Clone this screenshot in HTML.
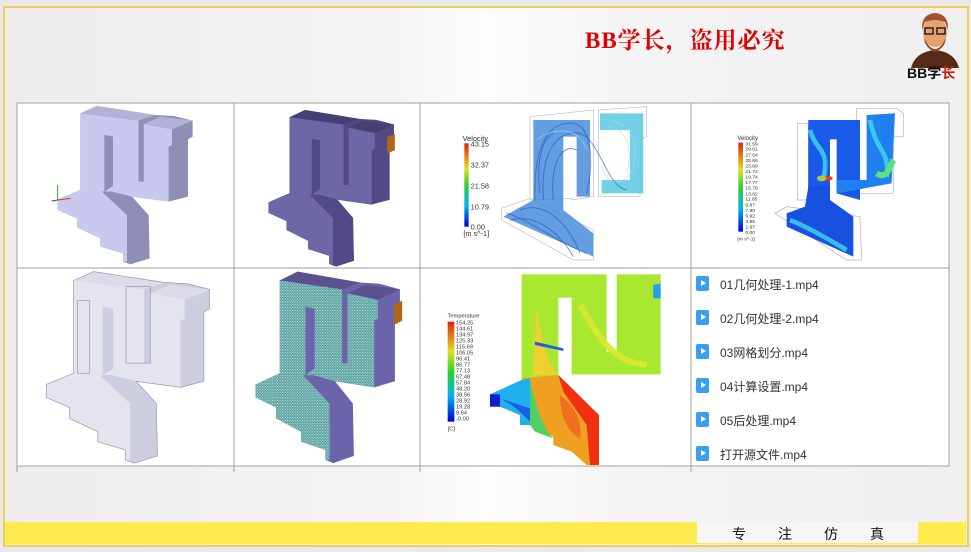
<!DOCTYPE html>
<html><head><meta charset="utf-8"><style>
*{margin:0;padding:0}
body{width:971px;height:552px;overflow:hidden;background:#e9e9e9;font-family:"Liberation Sans","Noto Sans CJK SC",sans-serif;position:relative}
.frame{position:absolute;left:3px;top:6px;width:962px;height:537px;border:2px solid #f0cf50;background:linear-gradient(90deg,#ededed 0%,#f4f4f4 40%,#fdfdfd 50%,#f4f4f4 65%,#efefef 100%)}
.title{position:absolute;left:585px;top:22px;font-family:"Liberation Serif","Noto Serif CJK SC",serif;font-weight:bold;font-size:23px;color:#e00000;letter-spacing:1px}
.bar{position:absolute;left:5px;top:522px;width:961px;height:22px;background:#ffea50}
.wbox{position:absolute;left:697px;top:522px;width:221px;height:21px;background:#f6f6f6;font-family:"Liberation Sans","Noto Sans CJK SC",sans-serif;font-size:14px;color:#111}
.wbox span{position:absolute;top:2px}
.list{position:absolute;left:696px;font-size:12px;color:#333}
.list div{position:absolute;left:0;width:200px;height:16px;white-space:nowrap}
.ic{position:absolute;left:0;top:0;width:13px;height:15px;background:#3a9ff0;border-radius:2px}
.ic:after{content:"";position:absolute;left:5px;top:4px;border-left:5px solid #fff;border-top:3.5px solid transparent;border-bottom:3.5px solid transparent}
.list span{position:absolute;left:24px;top:0}
</style></head><body>
<div class="frame"></div>
<div class="title">BB学长，盗用必究</div>

<svg width="971" height="552" style="position:absolute;left:0;top:0">
<defs>
<symbol id="solid" overflow="visible">
 <polygon style="fill:var(--s)" points="190,40 240,18 415,45 470,48 527,62 527,110 513,118 513,290 455,305 345,290 395,345 398,475 340,493 318,485 318,460 250,440 250,415 180,382 180,355 122,330 122,298 190,270"/>
 <polygon style="fill:var(--t)" points="190,40 240,18 415,45 365,62"/>
 <polygon style="fill:var(--t)" points="380,72 430,50 527,62 465,88"/>
 <polygon style="fill:var(--f)" points="190,40 365,62 365,245 380,245 380,72 465,88 465,135 455,140 455,305 345,290 285,275 255,275 330,345 330,485 318,485 318,460 250,440 250,415 180,382 180,355 122,330 122,298 190,270"/>
 <polygon style="fill:var(--s)" points="262,105 288,110 288,258 262,275"/>
 <polygon style="fill:var(--s)" points="365,62 380,62 380,245 365,245"/>
 <polygon style="fill:var(--s)" points="255,275 285,275 395,345 330,345"/>
</symbol>
<pattern id="mesh" width="7" height="7" patternUnits="userSpaceOnUse">
 <rect width="7" height="7" fill="#4f9b9b"/><circle cx="2" cy="2" r="1.6" fill="#e8f4f4"/><circle cx="5.5" cy="5" r="1.3" fill="#cfe8e6"/>
</pattern>
<linearGradient id="leg" x1="0" y1="1" x2="0" y2="0">
 <stop offset="0" stop-color="#0000d0"/><stop offset=".25" stop-color="#00b0f0"/><stop offset=".5" stop-color="#30d030"/><stop offset=".7" stop-color="#e0e020"/><stop offset="1" stop-color="#e02010"/>
</linearGradient>
</defs>
<rect x="17" y="103" width="932" height="363" fill="#fff" stroke="#a0a0a0" stroke-width="1"/>
<line x1="17" y1="268" x2="949" y2="268" stroke="#a0a0a0"/>
<line x1="234" y1="103" x2="234" y2="472" stroke="#a0a0a0"/>
<line x1="420" y1="103" x2="420" y2="472" stroke="#a0a0a0"/>
<line x1="691" y1="103" x2="691" y2="472" stroke="#a0a0a0"/>
<line x1="17" y1="466" x2="17" y2="472" stroke="#a0a0a0"/>

<g transform="translate(17,100) scale(0.3333)">
 <use href="#solid" style="--f:#c9c9ef;--s:#8f8fb6;--t:#b2b2d8"/>
 <line x1="122" y1="300" x2="122" y2="255" stroke="#2a2" stroke-width="3"/>
 <line x1="122" y1="300" x2="160" y2="295" stroke="#d33" stroke-width="3"/>
 <line x1="122" y1="300" x2="104" y2="303" stroke="#33c" stroke-width="3"/>
</g>
<g transform="translate(17,100) scale(0.3333) translate(641,12) scale(0.93,0.99)">
 <use href="#solid" style="--f:#6d67a8;--s:#514a86;--t:#463f72"/>
 <polygon points="505,100 527,90 527,140 505,150" fill="#b06818" transform="translate(-50,0) scale(1.1,1)"/>
</g>
<g transform="translate(17,265) scale(0.3333) translate(-60,-2) scale(1.21)" opacity="0.75">
 <use href="#solid" style="--f:#dcdcea;--s:#bdbdd6;--t:#cfcfe4"/>
</g>
<g transform="translate(17,265) scale(0.3333) translate(-60,-2) scale(1.21)" fill="none" stroke="#8a8aa8" stroke-width="1.5">
 <polygon points="190,40 240,18 415,45 470,48 527,62 527,110 513,118 513,290 455,305 345,290 395,345 398,475 340,493 318,485 318,460 250,440 250,415 180,382 180,355 122,330 122,298 190,270"/>
 <rect x="200" y="90" width="30" height="180"/><rect x="320" y="55" width="60" height="190"/>
</g>
<g transform="translate(17,265) scale(0.3333) translate(585,-2) scale(1.07,1.21)">
 <use href="#solid" style="--f:url(#mesh);--s:#6c64aa;--t:#5a5390"/>
 <polygon points="505,100 527,90 527,140 505,150" fill="#b06818" transform="translate(-20,0) scale(1.05,1)"/>
</g>

<g transform="translate(420,100) scale(0.3333)">
 <g fill="none" stroke="#b8c0c8" stroke-width="2">
  <polygon points="330,50 520,30 520,290 455,300 455,295 330,300"/>
  <polygon points="535,30 680,20 680,110 660,120 660,290 535,290"/>
  <polygon points="245,325 330,295 520,390 520,480 460,480 245,360"/>
 </g>
 <path d="M340 60 H510 V290 H470 V110 H430 V330 L520 400 V470 L250 350 L340 300 Z" fill="#3d86d8" opacity=".8"/>
 <path d="M540 40 H670 V280 H545 V240 H630 V90 H540 Z" fill="#5ac8e0" opacity=".85"/>
 <g fill="none" stroke="#1e50c0" stroke-width="3" opacity=".6">
  <path d="M345 300 C340 150 380 60 460 70 C520 80 520 200 500 280"/>
  <path d="M370 300 C360 140 420 90 480 100 C540 120 560 260 620 270"/>
  <path d="M260 340 C330 360 400 420 500 460"/>
  <path d="M300 330 C380 300 450 380 480 460"/>
  <path d="M400 300 C390 180 430 130 470 150"/>
  <path d="M360 280 C350 200 360 120 400 100"/>
  <path d="M270 360 C350 340 420 400 460 470"/>
 </g>
 <g fill="none" stroke="#9ee0f0" stroke-width="2" opacity=".8">
  <path d="M540 60 C620 50 660 120 640 200 C620 260 560 260 545 200"/>
  <path d="M350 120 C400 80 480 80 500 150"/>
  <path d="M560 80 C620 80 640 150 620 220"/>
 </g>
 <rect x="133" y="130" width="13" height="250" fill="url(#leg)"/>
 <g font-size="22" fill="#333" font-family="Liberation Sans">
  <text x="128" y="123">Velocity</text>
  <text x="152" y="139">43.15</text><text x="152" y="202">32.37</text><text x="152" y="265">21.58</text><text x="152" y="328">10.79</text><text x="152" y="388">0.00</text><text x="130" y="408">[m s^-1]</text>
 </g>
</g>

<g transform="translate(690,100) scale(0.3333)">
 <g fill="none" stroke="#b0b0b8" stroke-width="2">
  <polygon points="322,70 355,70 355,300 322,300"/>
  <polygon points="500,25 620,25 640,40 640,110 610,110 610,280 500,280"/>
  <polygon points="255,340 290,320 510,350 515,480 470,480"/>
 </g>
 <polygon points="355,60 510,60 510,300 440,280 440,118 420,118 420,300 355,300" fill="#1a5ae8"/>
 <polygon points="530,45 615,40 605,250 440,280 440,240 530,240" fill="#2080f0"/>
 <polygon points="355,260 420,255 420,300 490,350 490,470 290,380 290,340 345,320" fill="#1850e0"/>
 <path d="M360 90 C380 160 420 140 400 240 M540 60 C560 160 600 150 590 230 M300 360 C350 380 420 420 470 450" stroke="#40d8f0" stroke-width="14" fill="none" opacity=".8"/>
 <path d="M560 220 C590 240 600 200 610 180" stroke="#60e080" stroke-width="18" fill="none"/>
 <ellipse cx="410" cy="235" rx="18" ry="7" fill="#e04010"/>
 <ellipse cx="395" cy="235" rx="14" ry="9" fill="#c0e030" opacity=".8"/>
 <rect x="145" y="128" width="14" height="267" fill="url(#leg)"/>
 <g font-size="15" fill="#333" font-family="Liberation Sans">
  <text x="142" y="120" font-size="18">Velocity</text>
  <text x="166" y="136">31.59</text><text x="166" y="152">29.61</text><text x="166" y="169">27.64</text><text x="166" y="186">25.66</text><text x="166" y="202">23.69</text><text x="166" y="219">21.72</text><text x="166" y="236">19.74</text><text x="166" y="252">17.77</text><text x="166" y="269">15.79</text><text x="166" y="286">13.82</text><text x="166" y="302">11.85</text><text x="166" y="319">9.87</text><text x="166" y="336">7.90</text><text x="166" y="352">5.92</text><text x="166" y="369">3.95</text><text x="166" y="386">1.97</text><text x="166" y="402">0.00</text><text x="142" y="422">[m s^-1]</text>
 </g>
</g>

<g transform="translate(420,265) scale(0.3333)">
 <polygon points="305,28 722,28 722,328 455,328 455,98 415,98 415,330 305,345" fill="#a8e830"/>
 <rect x="560" y="28" width="30" height="232" fill="#fff"/>
 <polygon points="305,340 415,330 537,450 537,600 500,600 455,560 400,540 400,515 330,480 300,480 300,450 240,425 210,425 210,388 305,345" fill="#f0a020"/>
 <polygon points="210,388 305,345 330,340 330,480 300,480 300,450 240,425 210,425" fill="#20b0f0"/>
 <rect x="210" y="388" width="30" height="37" fill="#1020d0"/>
 <path d="M240 400 C280 420 300 440 330 470 L330 430 Z" fill="#1860e8"/>
 <path d="M330 345 C350 420 360 480 400 520 L345 500 L330 480 Z" fill="#50d060"/>
 <polygon points="415,330 537,450 537,600 510,600 500,480 430,380" fill="#f03010"/>
 <path d="M420 390 C460 420 490 470 480 520 C440 500 420 450 420 390Z" fill="#f07020"/>
 <path d="M350 120 C360 200 370 260 410 330 L340 330 Z" fill="#f0d030"/>
 <path d="M345 230 L430 250 L430 258 L345 240 Z" fill="#2060e0"/>
 <path d="M700 60 L722 55 L722 100 L700 100 Z" fill="#20a0f0"/>
 <path d="M480 120 C520 180 560 290 680 300" stroke="#d8e830" stroke-width="18" fill="none"/>
 <rect x="83" y="170" width="20" height="300" fill="url(#leg)"/>
 <g font-size="17" fill="#333" font-family="Liberation Sans">
  <text x="83" y="158">Temperature</text>
  <text x="108" y="178">154.25</text><text x="108" y="196">144.61</text><text x="108" y="214">134.97</text><text x="108" y="232">125.33</text><text x="108" y="250">115.69</text><text x="108" y="268">106.05</text><text x="108" y="286">96.41</text><text x="108" y="304">86.77</text><text x="108" y="322">77.13</text><text x="108" y="340">67.48</text><text x="108" y="358">57.84</text><text x="108" y="376">48.20</text><text x="108" y="394">38.56</text><text x="108" y="412">28.92</text><text x="108" y="430">19.28</text><text x="108" y="448">9.64</text><text x="108" y="466">-0.00</text><text x="83" y="497">[C]</text>
 </g>
</g>

<g transform="translate(905,10)">
 <path d="M6 58 Q10 42 30 40 Q50 42 54 58 Z" fill="#5a2a18"/>
 <ellipse cx="30" cy="22" rx="12" ry="15" fill="#e8a070"/>
 <path d="M17 20 Q16 4 30 3 Q44 4 43 20 L40 12 Q30 8 20 12 Z" fill="#a0522d"/>
 <path d="M19 28 Q30 50 41 28 Q40 38 30 42 Q20 38 19 28Z" fill="#8a4a28"/>
 <rect x="20" y="18" width="8" height="6" fill="none" stroke="#222" stroke-width="1.5"/>
 <rect x="32" y="18" width="8" height="6" fill="none" stroke="#222" stroke-width="1.5"/>
 <text x="2" y="68" font-size="14" font-weight="bold" fill="#111" font-family="Liberation Sans,Noto Sans CJK SC,sans-serif">BB学<tspan fill="#d02010">长</tspan></text>
</g>
</svg>

<div class="list" style="top:276px">
 <div style="top:0"><i class="ic"></i><span>01几何处理-1.mp4</span></div>
 <div style="top:34px"><i class="ic"></i><span>02几何处理-2.mp4</span></div>
 <div style="top:68px"><i class="ic"></i><span>03网格划分.mp4</span></div>
 <div style="top:102px"><i class="ic"></i><span>04计算设置.mp4</span></div>
 <div style="top:136px"><i class="ic"></i><span>05后处理.mp4</span></div>
 <div style="top:170px"><i class="ic"></i><span>打开源文件.mp4</span></div>
</div>

<div class="bar"></div>
<div class="wbox"><span style="left:35px">专</span><span style="left:81px">注</span><span style="left:127px">仿</span><span style="left:173px">真</span></div>
</body></html>
